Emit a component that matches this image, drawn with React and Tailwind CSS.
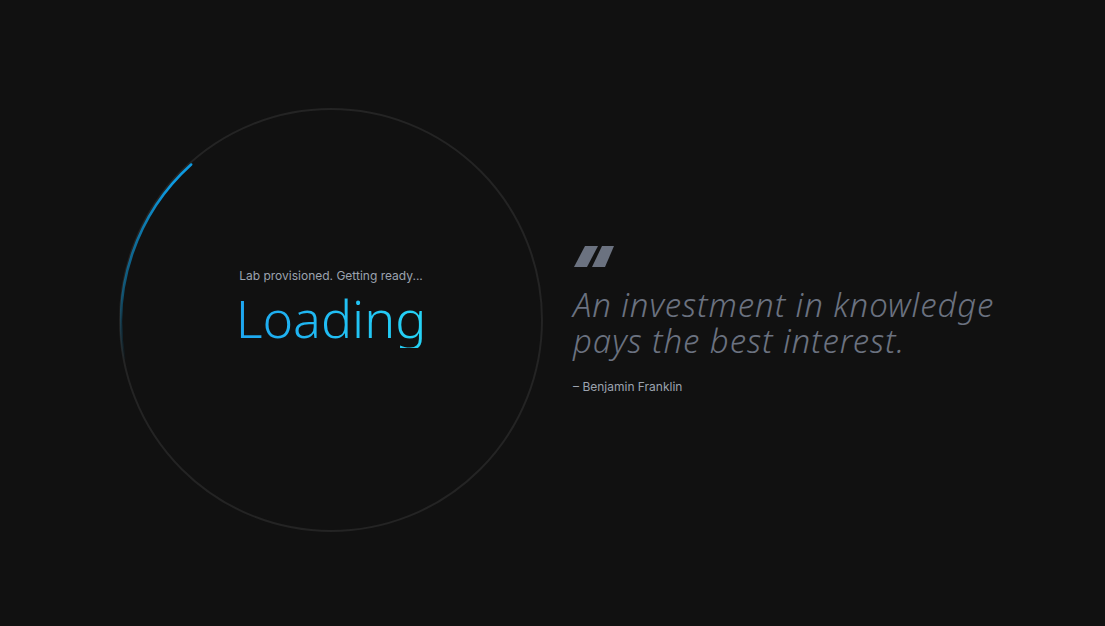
import React from 'react';

const Ring = () => {
  // arc from just below 9 o'clock up to ~10:30, fading out at the bottom
  const r = 212;
  const c = 213;
  const pt = (deg) => {
    const a = (deg * Math.PI) / 180;
    return [c + r * Math.cos(a), c + r * Math.sin(a)];
  };
  const [x1, y1] = pt(170);
  const [x2, y2] = pt(228);
  return (
    <svg width="426" height="426" viewBox="0 0 426 426" className="absolute -left-[1px] -top-[1px]">
      <defs>
        <linearGradient id="arc" x1="0" y1="1" x2="0.4" y2="0">
          <stop offset="0%" stopColor="#0b8fcc" stopOpacity="0" />
          <stop offset="30%" stopColor="#0b8fcc" stopOpacity="0.5" />
          <stop offset="100%" stopColor="#0d9ae0" stopOpacity="1" />
        </linearGradient>
      </defs>
      <path
        d={`M ${x1} ${y1} A ${r} ${r} 0 0 1 ${x2} ${y2}`}
        fill="none"
        stroke="url(#arc)"
        strokeWidth="2.5"
        strokeLinecap="round"
      />
    </svg>
  );
};

const QuoteMark = () => (
  <svg width="42" height="24" viewBox="0 0 42 24" className="block">
    <polygon points="1,22 14,22 25,1 12,1" fill="#6b7280" />
    <polygon points="19,22 32,22 41,1 29,1" fill="#6b7280" />
  </svg>
);

export default function App() {
  return (
    <div className="min-h-[626px] w-full bg-[#111111] flex items-start pt-[108px] pl-[119px] font-['Inter',sans-serif]">
      <div className="flex items-center gap-[30px]">
        <div className="relative w-[424px] h-[424px] rounded-full border-2 border-[#242424] flex flex-col items-center justify-center shrink-0">
          <Ring />
          <div className="flex flex-col items-center -mt-[24px]">
            <p className="text-[12px] leading-4 text-[#9ca3af]">Lab provisioned. Getting ready...</p>
            <h1 className="mt-[4px] text-[52px] leading-[60px] font-light font-['Noto_Sans',sans-serif] bg-gradient-to-r from-[#1ea6f0] to-[#26d4f6] bg-clip-text text-transparent">
              Loading
            </h1>
          </div>
        </div>
        <div className="flex flex-col">
          <QuoteMark />
          <p className="mt-[18px] text-[33px] leading-[36px] tracking-[0.9px] italic font-light text-[#6b7280] font-['Noto_Sans',sans-serif]">
            An investment in knowledge
            <br />
            pays the best interest.
          </p>
          <p className="mt-[20px] text-[12px] leading-4 text-[#9ca3af]">– Benjamin Franklin</p>
        </div>
      </div>
    </div>
  );
}
